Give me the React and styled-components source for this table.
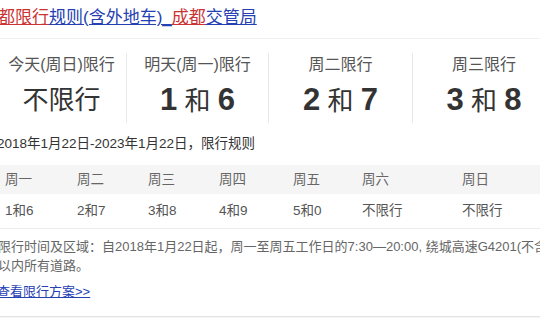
import React from 'react';
import styled, { createGlobalStyle } from 'styled-components';

const GlobalStyle = createGlobalStyle`
  html, body {
    margin: 0;
    padding: 0;
    background: #fff;
    width: 540px;
    height: 320px;
    overflow: hidden;
  }
  body {
    font-family: Arial, "Liberation Sans", "Noto Sans CJK SC", sans-serif;
  }
`;

const Card = styled.div`
  width: 620px;
  margin-left: -3px;
  padding-bottom: 14px;
  border-bottom: 1px solid #e3e3e3;
  box-shadow: 0 1px 1px rgba(0, 0, 0, 0.04);
`;

const Header = styled.div`
  padding: 7px 0 9px 1px;
  border-bottom: 1px solid #f0f0f0;
  white-space: nowrap;
`;

const TitleLink = styled.a`
  font-size: 17px;
  line-height: 22px;
  color: #2440b3;
  text-decoration: underline;
  cursor: pointer;
`;

const Hit = styled.em`
  font-style: normal;
  color: #c33;
  text-decoration: underline;
`;

const Forecast = styled.div`
  display: grid;
  grid-template-columns: 129px 142px 144px 143px;
  margin-top: 14px;
`;

const Day = styled.div`
  display: flex;
  flex-direction: column;
  align-items: center;
  padding: 2px 0 4px;
  border-left: ${(p) => (p.$first ? 'none' : '1px solid #e8e8e8')};
`;

const DayLabel = styled.div`
  font-size: 16px;
  line-height: 20px;
  color: #555;
  white-space: nowrap;
`;

const DayValue = styled.div`
  margin-top: 7px;
  font-size: 26px;
  line-height: 36px;
  color: #333;
  white-space: nowrap;
`;

const Num = styled.b`
  font-size: 31px;
  font-weight: bold;
  color: #333;
`;

const Period = styled.div`
  margin-top: 11px;
  font-size: 13.5px;
  line-height: 20px;
  color: #333;
  white-space: nowrap;
`;

const Table = styled.div`
  margin-top: 11px;
`;

const Row = styled.div`
  display: grid;
  grid-template-columns: 72px 71px 71px 74px 69px 100px 1fr;
  height: ${(p) => (p.$head ? '29px' : '34px')};
  line-height: ${(p) => (p.$head ? '29px' : '34px')};
  background: ${(p) => (p.$head ? '#f5f5f5' : '#fff')};
  border-bottom: ${(p) => (p.$head ? 'none' : '1px solid #ececec')};
  color: ${(p) => (p.$head ? '#666' : '#555')};
  font-size: 13.5px;
`;

const Cell = styled.div`
  padding-left: 8px;
  white-space: nowrap;
`;

const Notes = styled.div`
  margin-top: 8px;
  font-size: 13px;
  line-height: 19px;
  color: #666;
`;

const NoteLine = styled.div`
  white-space: nowrap;
  margin-left: 1px;
`;

const MoreLink = styled.a`
  display: inline-block;
  margin-top: 7px;
  font-size: 13px;
  line-height: 20px;
  color: #2440b3;
  text-decoration: underline;
  cursor: pointer;
`;

const days = [
  { label: '今天(周日)限行', value: null },
  { label: '明天(周一)限行', value: ['1', '6'] },
  { label: '周二限行', value: ['2', '7'] },
  { label: '周三限行', value: ['3', '8'] },
];

const week = [
  ['周一', '1和6'],
  ['周二', '2和7'],
  ['周三', '3和8'],
  ['周四', '4和9'],
  ['周五', '5和0'],
  ['周六', '不限行'],
  ['周日', '不限行'],
];

export default function App() {
  return (
    <>
      <GlobalStyle />
      <Card>
        <Header>
          <TitleLink>
            <Hit>都限行</Hit>规则(含外地车)_<Hit>成都</Hit>交管局
          </TitleLink>
        </Header>

        <Forecast>
          {days.map((d, i) => (
            <Day key={d.label} $first={i === 0}>
              <DayLabel>{d.label}</DayLabel>
              <DayValue>
                {d.value ? (
                  <>
                    <Num>{d.value[0]}</Num> 和 <Num>{d.value[1]}</Num>
                  </>
                ) : (
                  '不限行'
                )}
              </DayValue>
            </Day>
          ))}
        </Forecast>

        <Period>2018年1月22日-2023年1月22日，限行规则</Period>

        <Table>
          <Row $head>
            {week.map(([d]) => (
              <Cell key={d}>{d}</Cell>
            ))}
          </Row>
          <Row>
            {week.map(([d, v]) => (
              <Cell key={d}>{v}</Cell>
            ))}
          </Row>
        </Table>

        <Notes>
          <NoteLine>
            限行时间及区域：自2018年1月22日起，周一至周五工作日的7:30—20:00, 绕城高速G4201(不含
          </NoteLine>
          <NoteLine>以内所有道路。</NoteLine>
        </Notes>

        <MoreLink>查看限行方案&gt;&gt;</MoreLink>
      </Card>
    </>
  );
}
